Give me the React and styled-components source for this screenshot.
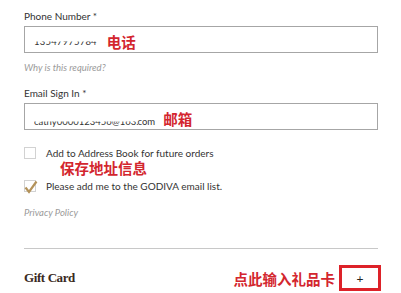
import styled, { createGlobalStyle } from "styled-components";

const GlobalStyle = createGlobalStyle`
    body {
        margin: 0;
        background: #fff;
        font-family: Lato, "Noto Sans", sans-serif;
    }
`;

const Page = styled.div`
    width: 401px;
    height: 293px;
    overflow: hidden;
    box-sizing: border-box;
    padding: 10px 23px 0 24px;
    display: flex;
    flex-direction: column;
`;

const Label = styled.div`
    font-size: 10px;
    line-height: 12px;
    color: #333;
    margin-top: ${(props) => props.$top || 0}px;
    margin-bottom: 4px;
`;

const InputBox = styled.div`
    height: 27px;
    box-sizing: border-box;
    border: 1px solid #a6a6a6;
    padding: 4px 0 0 9px;
    display: flex;
    align-items: center;
    gap: ${(props) => props.$gap}px;
`;

const Hidden = styled.span`
    font-size: 9.5px;
    color: #333;
    letter-spacing: ${(props) => props.$spacing || 0}px;
    clip-path: inset(50% 0 0 0);
`;

const Visible = styled.span`
    font-size: 9.5px;
    color: #333;
    margin-left: -1px;
`;

const Note = styled.span`
    font-family: "Noto Sans CJK SC", sans-serif;
    font-weight: 700;
    font-size: 14.5px;
    line-height: 15px;
    color: #d3262e;
    margin-left: ${(props) => props.$left || 0}px;
    margin-top: ${(props) => props.$top || 0}px;
`;

const Helper = styled.div`
    font-size: 9.5px;
    line-height: 12px;
    font-style: italic;
    color: #9a9a9a;
    margin-top: ${(props) => props.$top}px;
`;

const CheckRow = styled.div`
    display: flex;
    align-items: center;
    height: 12px;
    margin-top: ${(props) => props.$top}px;
`;

const Box = styled.span`
    position: relative;
    width: 12px;
    height: 12px;
    box-sizing: border-box;
    border: 1px solid #d2d2d2;
    margin-right: 10px;
`;

const Tick = styled.svg`
    position: absolute;
    left: -1px;
    top: -1px;
`;

const CheckText = styled.span`
    font-size: 10px;
    color: #333;
`;

const Divider = styled.div`
    height: 1px;
    background: #c8c8c8;
    margin-top: 29px;
`;

const GiftRow = styled.div`
    display: flex;
    align-items: center;
    height: 26px;
    margin-top: 16px;
    margin-right: -3px;
`;

const GiftTitle = styled.span`
    font-family: "Liberation Serif", serif;
    font-weight: 700;
    font-size: 13px;
    letter-spacing: -0.4px;
    color: #3a2a22;
    flex: 1;
`;

const PlusBox = styled.span`
    width: 42px;
    height: 26px;
    box-sizing: border-box;
    border: 3px solid #dd2229;
    margin-left: 4px;
    display: flex;
    align-items: center;
    justify-content: center;
    font-size: 12px;
    color: #222;
`;

export default function App() {
    return (
        <>
            <GlobalStyle />
            <Page>
                <Label>Phone Number *</Label>
                <InputBox $gap={10}>
                    <Hidden $spacing={0.2}>13547975784</Hidden>
                    <Note>电话</Note>
                </InputBox>
                <Helper $top={9}>Why is this required?</Helper>

                <Label $top={13}>Email Sign In *</Label>
                <InputBox $gap={8}>
                    <span>
                        <Hidden>cathy0000123456@163.</Hidden>
                        <Visible>com</Visible>
                    </span>
                    <Note>邮箱</Note>
                </InputBox>

                <CheckRow $top={17}>
                    <Box />
                    <CheckText>Add to Address Book for future orders</CheckText>
                </CheckRow>
                <Note $left={36} $top={1}>保存地址信息</Note>
                <CheckRow $top={5}>
                    <Box>
                        <Tick width="14" height="14" viewBox="0 0 14 14">
                            <path d="M1.5 7.5 L5 12 L12.5 1.5" fill="none" stroke="#b3925a" strokeWidth="2.2" />
                        </Tick>
                    </Box>
                    <CheckText>Please add me to the GODIVA email list.</CheckText>
                </CheckRow>
                <Helper $top={15}>Privacy Policy</Helper>

                <Divider />
                <GiftRow>
                    <GiftTitle>Gift Card</GiftTitle>
                    <Note>点此输入礼品卡</Note>
                    <PlusBox>+</PlusBox>
                </GiftRow>
            </Page>
        </>
    );
}
